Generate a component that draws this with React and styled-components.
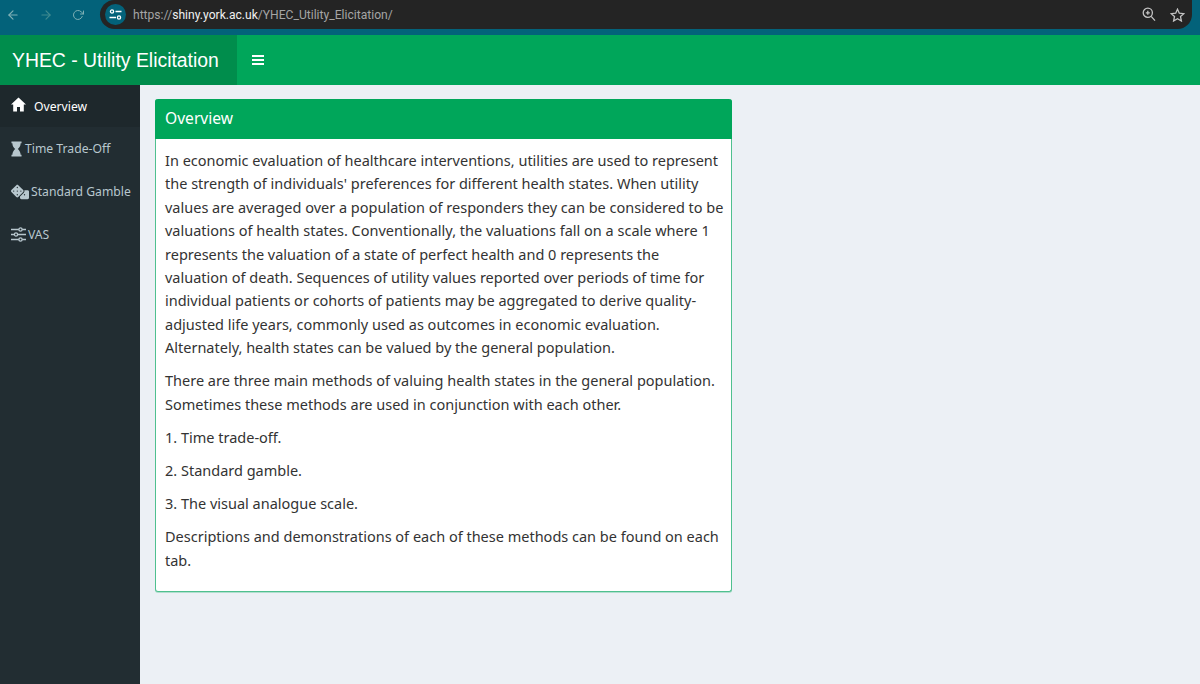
import React from "react";
import styled, { createGlobalStyle } from "styled-components";
import { FaDice } from "react-icons/fa";
import { FiArrowLeft, FiArrowRight, FiRotateCw } from "react-icons/fi";

const GlobalStyle = createGlobalStyle`
  html, body {
    margin: 0;
    padding: 0;
    height: 100%;
    background: #ecf0f5;
  }
  * { box-sizing: border-box; }
`;

const Page = styled.div`
  width: 1200px;
  height: 684px;
  display: flex;
  flex-direction: column;
  overflow: hidden;
  font-family: "Noto Sans", sans-serif;
`;

const Chrome = styled.div`
  height: 35px;
  flex: none;
  background: #03627a;
  display: flex;
  align-items: flex-start;
  padding-left: 6px;
`;

const NavIcons = styled.div`
  display: flex;
  align-items: center;
  gap: 19px;
  height: 29px;
  width: 94px;
`;

const NavIcon = styled.span`
  display: flex;
  color: ${(p) => p.$color};
`;

const AddressBar = styled.div`
  width: 1092px;
  height: 29px;
  background: #242424;
  border-radius: 15px;
  border-top-right-radius: 0;
  display: flex;
  align-items: center;
  padding-left: 5px;
`;

const SiteChip = styled.span`
  width: 21px;
  height: 21px;
  border-radius: 50%;
  background: #03627a;
  display: flex;
  align-items: center;
  justify-content: center;
  margin-right: 7px;
`;

const Url = styled.span`
  font-family: "Roboto", sans-serif;
  font-size: 12.1px;
  color: #a5a5a5;
  flex: 1;
  b {
    font-weight: 400;
    color: #f0f0f0;
  }
`;

const BarActions = styled.div`
  display: flex;
  align-items: center;
  gap: 14px;
  padding-right: 7px;
`;

const Header = styled.header`
  height: 50px;
  flex: none;
  background: #00a65a;
  display: flex;
  align-items: center;
`;

const Logo = styled.div`
  width: 237px;
  height: 100%;
  background: #008d4c;
  color: #fff;
  font-family: "Liberation Sans", Arial, sans-serif;
  font-size: 19.4px;
  line-height: 50px;
  padding-left: 12px;
  white-space: nowrap;
`;

const Burger = styled.div`
  width: 12px;
  margin-left: 15px;
  display: flex;
  flex-direction: column;
  gap: 2px;
  span {
    height: 2px;
    background: #fff;
  }
`;

const Body = styled.div`
  flex: 1;
  display: flex;
  min-height: 0;
`;

const Sidebar = styled.nav`
  width: 140px;
  flex: none;
  background: #222d32;
`;

const MenuItem = styled.div`
  height: ${(p) => (p.$active ? "42px" : "43px")};
  display: flex;
  align-items: center;
  padding-left: 11px;
  gap: ${(p) => p.$gap}px;
  background: ${(p) => (p.$active ? "#1e282c" : "transparent")};
  color: ${(p) => (p.$active ? "#fff" : "#b8c7ce")};
  font-size: 12.2px;
  white-space: nowrap;
  svg {
    flex: none;
  }
`;

const Content = styled.main`
  flex: 1;
  padding: 14px 0 0 15px;
`;

const Card = styled.section`
  width: 577px;
  height: 493px;
  background: #fff;
  border: 1px solid #4fc08f;
  border-top: none;
  border-radius: 3px;
  box-shadow: 0 1px 0 rgba(0, 166, 90, 0.25);
`;

const CardHeader = styled.h3`
  margin: 0 -1px;
  height: 40px;
  padding-left: 10px;
  background: #00a65a;
  border-radius: 3px 3px 0 0;
  color: #fff;
  font-size: 15.6px;
  font-weight: 400;
  line-height: 39px;
`;

const CardBody = styled.div`
  padding: 10px 9px 0;
`;

const Para = styled.p`
  margin: 0 0 9.7px;
  color: #333;
  font-size: 14.5px;
  line-height: 23.4px;
  white-space: nowrap;
`;

const RaisedSvg = styled.svg`
  margin-bottom: ${(p) => p.$lift}px;
`;

const HomeIcon = () => (
  <RaisedSvg $lift={3} width="15" height="15" viewBox="0 0 15 15" fill="currentColor">
    <path d="M7.5 0.5L15 7.5H12.8V14.5H9V10H6V14.5H2.2V7.5H0Z" />
  </RaisedSvg>
);

const HourglassIcon = () => (
  <svg width="11" height="16" viewBox="0 0 12 15" preserveAspectRatio="none" fill="currentColor">
    <path d="M0.5 0.5H11.5V2H10.5C10.5 4.6 9 6.2 7.4 7.5C9 8.8 10.5 10.4 10.5 13H11.5V14.5H0.5V13H1.5C1.5 10.4 3 8.8 4.6 7.5C3 6.2 1.5 4.6 1.5 2H0.5Z" />
  </svg>
);

const SlidersIcon = () => (
  <svg width="15" height="15" viewBox="0 0 15 15" fill="#222d32" stroke="currentColor" strokeWidth="1.3">
    <path d="M0 2.5H15M0 7.5H15M0 12.5H15" />
    <circle cx="9.5" cy="2.5" r="1.6" />
    <circle cx="5" cy="7.5" r="1.6" />
    <circle cx="9.5" cy="12.5" r="1.6" />
  </svg>
);

const menu = [
  { label: "Overview", icon: <HomeIcon />, gap: 8, active: true },
  { label: "Time Trade-Off", icon: <HourglassIcon />, gap: 3 },
  { label: "Standard Gamble", icon: <FaDice size={18} />, gap: 2 },
  { label: "VAS", icon: <SlidersIcon />, gap: 2 },
];

const intro = [
  "In economic evaluation of healthcare interventions, utilities are used to represent",
  "the strength of individuals' preferences for different health states. When utility",
  "values are averaged over a population of responders they can be considered to be",
  "valuations of health states. Conventionally, the valuations fall on a scale where 1",
  "represents the valuation of a state of perfect health and 0 represents the",
  "valuation of death. Sequences of utility values reported over periods of time for",
  "individual patients or cohorts of patients may be aggregated to derive quality-",
  "adjusted life years, commonly used as outcomes in economic evaluation.",
  "Alternately, health states can be valued by the general population.",
];

function Lines({ lines }) {
  return (
    <Para>
      {lines.map((line, i) => (
        <React.Fragment key={i}>
          {line}
          {i < lines.length - 1 && <br />}
        </React.Fragment>
      ))}
    </Para>
  );
}

function App() {
  return (
    <Page>
      <GlobalStyle />
      <Chrome>
        <NavIcons>
          <NavIcon $color="#7fb0b5"><FiArrowLeft size={14} /></NavIcon>
          <NavIcon $color="#3f8a90"><FiArrowRight size={14} /></NavIcon>
          <NavIcon $color="#7fb0b5"><FiRotateCw size={12} /></NavIcon>
        </NavIcons>
        <AddressBar>
          <SiteChip>
            <svg width="13" height="11" viewBox="0 0 13 11" fill="none" stroke="#fff" strokeWidth="1.3">
              <circle cx="3" cy="2.5" r="1.6" />
              <path d="M6.5 2.5H12.5M0.5 8.5H7" />
              <circle cx="10" cy="8.5" r="1.6" />
            </svg>
          </SiteChip>
          <Url>https://<b>shiny.york.ac.uk</b>/YHEC_Utility_Elicitation/</Url>
          <BarActions>
            <svg width="14" height="15" viewBox="0 0 14 15" fill="none" stroke="#c4c4c4" strokeWidth="1.3">
              <circle cx="5.8" cy="5.8" r="4.6" />
              <path d="M9.2 9.4L13 13.6M3.8 5.8H7.8M5.8 3.8V7.8" />
            </svg>
            <svg width="15" height="14" viewBox="0 0 15 14" fill="none" stroke="#c4c4c4" strokeWidth="1.3">
              <path d="M7.5 1.2L9.3 5.2L13.8 5.7L10.5 8.6L11.4 13L7.5 10.8L3.6 13L4.5 8.6L1.2 5.7L5.7 5.2Z" />
            </svg>
          </BarActions>
        </AddressBar>
      </Chrome>
      <Header>
        <Logo>YHEC - Utility Elicitation</Logo>
        <Burger><span /><span /><span /></Burger>
      </Header>
      <Body>
        <Sidebar>
          {menu.map(({ label, icon, gap, active }) => (
            <MenuItem key={label} $gap={gap} $active={active}>
              {icon}
              {label}
            </MenuItem>
          ))}
        </Sidebar>
        <Content>
          <Card>
            <CardHeader>Overview</CardHeader>
            <CardBody>
              <Lines lines={intro} />
              <Lines lines={[
                "There are three main methods of valuing health states in the general population.",
                "Sometimes these methods are used in conjunction with each other.",
              ]} />
              <Lines lines={["1. Time trade-off."]} />
              <Lines lines={["2. Standard gamble."]} />
              <Lines lines={["3. The visual analogue scale."]} />
              <Lines lines={[
                "Descriptions and demonstrations of each of these methods can be found on each",
                "tab.",
              ]} />
            </CardBody>
          </Card>
        </Content>
      </Body>
    </Page>
  );
}

export default App;
